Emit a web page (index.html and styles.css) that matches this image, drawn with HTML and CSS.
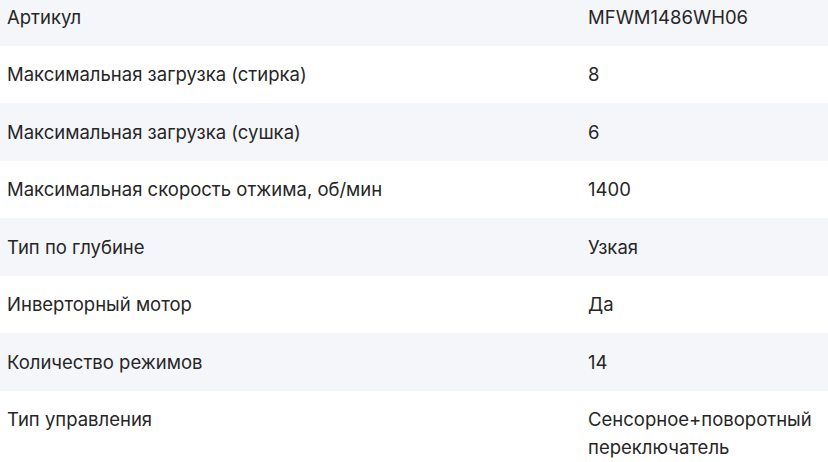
FILE: index.html
```html
<!DOCTYPE html>
<html lang="ru">
<head>
<meta charset="utf-8">
<link rel="stylesheet" href="styles.css">
</head>
<body>
<div class="specs">
  <div class="row"><div class="label">Артикул</div><div class="value">MFWM1486WH06</div></div>
  <div class="row"><div class="label">Максимальная загрузка (стирка)</div><div class="value">8</div></div>
  <div class="row"><div class="label">Максимальная загрузка (сушка)</div><div class="value">6</div></div>
  <div class="row"><div class="label">Максимальная скорость отжима, об/мин</div><div class="value">1400</div></div>
  <div class="row"><div class="label">Тип по глубине</div><div class="value">Узкая</div></div>
  <div class="row"><div class="label">Инверторный мотор</div><div class="value">Да</div></div>
  <div class="row"><div class="label">Количество режимов</div><div class="value">14</div></div>
  <div class="row"><div class="label">Тип управления</div><div class="value">Сенсорное+поворотный переключатель</div></div>
</div>
</body>
</html>
```

FILE: styles.css
```css
html, body {
  margin: 0;
  padding: 0;
  background: #ffffff;
}
body {
  font-family: Inter, "Noto Sans", sans-serif;
  font-size: 18.5px;
  line-height: 28px;
  color: #262626;
  overflow: hidden;
}
.specs {
  margin-top: -12px;
}
.row {
  display: grid;
  grid-template-columns: 581px 1fr;
  padding: 14.75px 12px 14.75px 7px;
}
.row:nth-child(odd) {
  background: #f5f6fa;
}
```
